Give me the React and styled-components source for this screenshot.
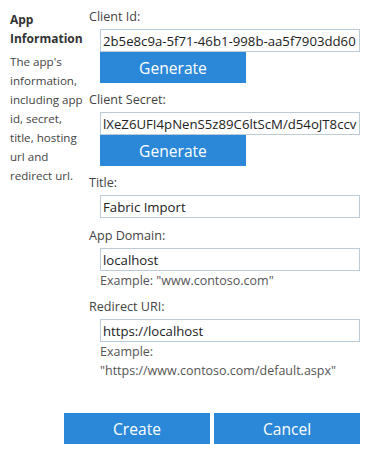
import React from 'react';
import styled, { createGlobalStyle } from 'styled-components';

const GlobalStyle = createGlobalStyle`
  html, body {
    margin: 0;
    background: #fff;
  }
  body {
    font-family: "Open Sans", "Liberation Sans", sans-serif;
    color: #333;
  }
  button,
  input {
    appearance: none;
    font-family: inherit;
  }
`;

const Page = styled.div`
  display: flex;
  width: 374px;
  padding: 10px 0 0 10px;
  box-sizing: border-box;
`;

const Side = styled.div`
  width: 75px;
  padding-right: 4px;
  flex: none;
`;

const SideTitle = styled.h2`
  margin: 0 0 4px;
  font-size: 12px;
  font-weight: 700;
  line-height: 19px;
  color: #333;
`;

const SideText = styled.p`
  margin: 0;
  font-size: 11.6px;
  line-height: 19px;
  color: #444;
`;

const Form = styled.div`
  width: 271px;
  margin-top: -3px;
`;

const Field = styled.div`
  margin-bottom: ${p => p.$gap ?? 7}px;
`;

const Label = styled.label`
  display: block;
  font-size: 12.6px;
  line-height: 20px;
  color: #444;
  margin-bottom: 2px;
`;

const Indent = styled.div`
  padding-left: 11px;
`;

const TextBox = styled.input`
  display: block;
  width: 260px;
  height: 23px;
  box-sizing: border-box;
  margin: 0;
  padding: 0 2px;
  border: 1px solid #bccbd8;
  border-radius: 0;
  background: #fff;
  font-size: 13.2px;
  color: #222;
  outline: none;
`;

const Button = styled.button`
  display: block;
  width: 146px;
  height: 31px;
  margin: 0;
  padding: 0;
  border: 0;
  border-radius: 0;
  background: #2b88d8;
  color: #fff;
  font-size: 15.6px;
  cursor: pointer;
`;

const Hint = styled.div`
  font-size: 12.5px;
  line-height: 19px;
  color: #555;
`;

const Footer = styled.div`
  display: flex;
  justify-content: flex-end;
  gap: 4px;
  width: 350px;
  margin: 33px 0 0 -79px;
`;

const fields = {
  clientId: '2b5e8c9a-5f71-46b1-998b-aa5f7903dd60',
  clientSecret: 'lXeZ6UFI4pNenS5z89C6ltScM/d54oJT8ccvQ=',
};

const App = () => (
  <>
    <GlobalStyle />
    <Page>
      <Side>
        <SideTitle>App Information</SideTitle>
        <SideText>
          The app's information, including app id, secret, title, hosting url and redirect url.
        </SideText>
      </Side>
      <Form>
        <Field>
          <Label htmlFor="clientId">Client Id:</Label>
          <Indent>
            <TextBox id="clientId" defaultValue={fields.clientId} />
            <Button type="button">Generate</Button>
          </Indent>
        </Field>
        <Field>
          <Label htmlFor="clientSecret">Client Secret:</Label>
          <Indent>
            <TextBox id="clientSecret" defaultValue={fields.clientSecret} />
            <Button type="button">Generate</Button>
          </Indent>
        </Field>
        <Field $gap={8}>
          <Label htmlFor="title">Title:</Label>
          <Indent>
            <TextBox id="title" defaultValue="Fabric Import" />
          </Indent>
        </Field>
        <Field $gap={7}>
          <Label htmlFor="appDomain">App Domain:</Label>
          <Indent>
            <TextBox id="appDomain" defaultValue="localhost" />
            <Hint>Example: "www.contoso.com"</Hint>
          </Indent>
        </Field>
        <Field $gap={0}>
          <Label htmlFor="redirectUri">Redirect URI:</Label>
          <Indent>
            <TextBox id="redirectUri" defaultValue="https://localhost" />
            <Hint>
              Example:
              <br />
              "https://www.contoso.com/default.aspx"
            </Hint>
          </Indent>
        </Field>
        <Footer>
          <Button type="button">Create</Button>
          <Button type="button">Cancel</Button>
        </Footer>
      </Form>
    </Page>
  </>
);

export default App;
